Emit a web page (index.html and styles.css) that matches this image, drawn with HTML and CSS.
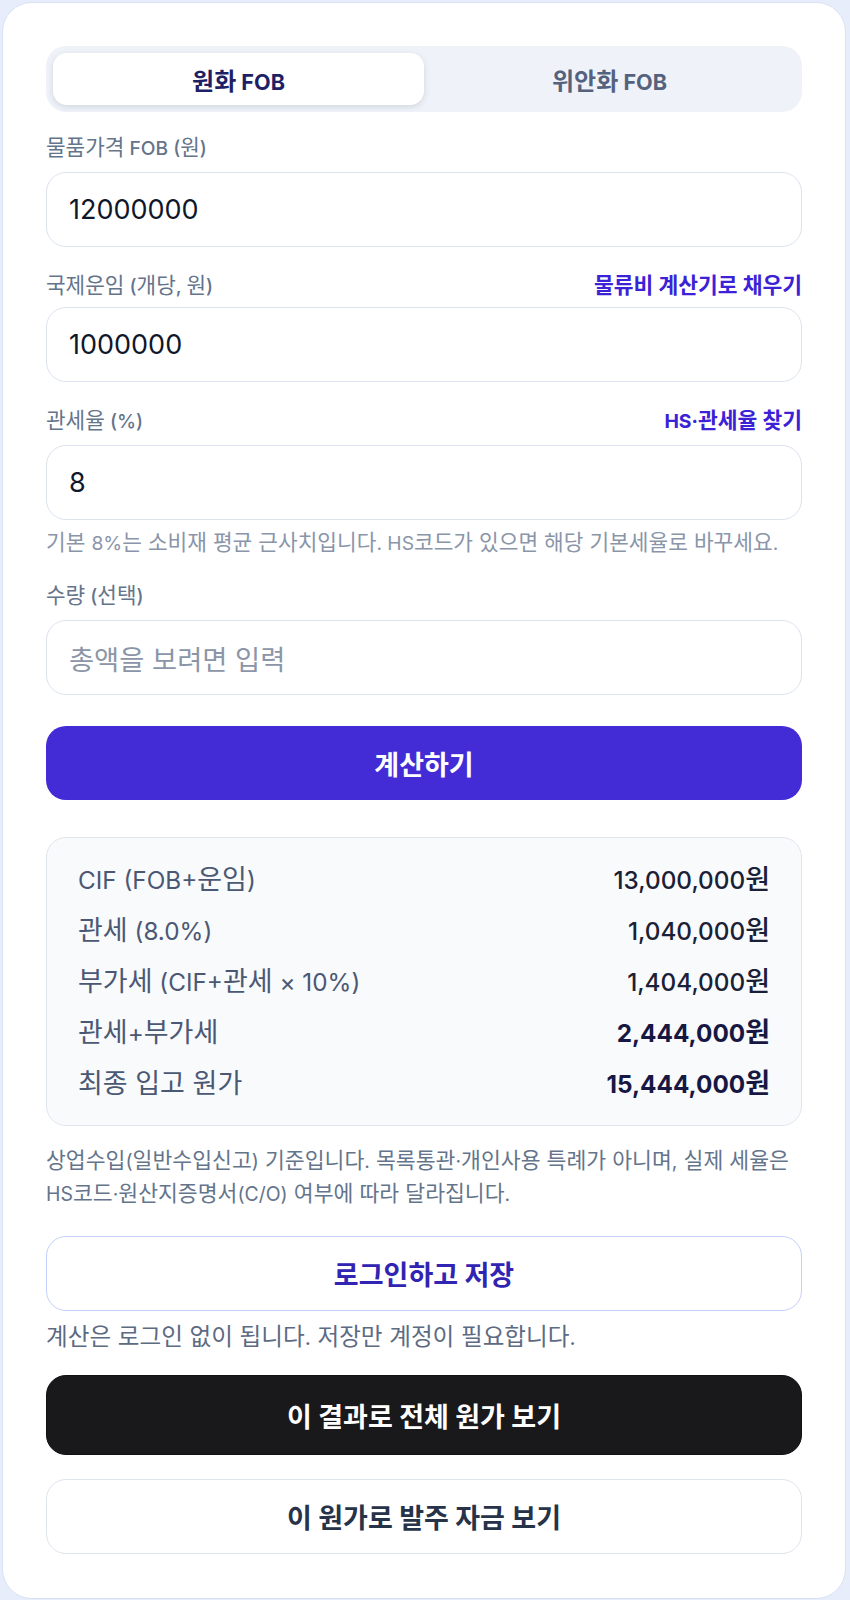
FILE: index.html
```html
<!DOCTYPE html>
<html lang="ko">
<head>
<meta charset="utf-8">
<title>수입 원가 계산기</title>
<link rel="stylesheet" href="styles.css">
</head>
<body>
<main class="card">
  <div class="tabs">
    <button class="tab tab-active" type="button">원화<span class="en"> FOB</span></button>
    <button class="tab" type="button">위안화<span class="en"> FOB</span></button>
  </div>

  <div class="field field-first">
    <div class="label-row"><label class="label">물품가격<span class="en"> FOB (</span>원<span class="en">)</span></label></div>
    <div class="input"><span class="value">12000000</span></div>
  </div>

  <div class="field">
    <div class="label-row label-row-link">
      <label class="label">국제운임<span class="en"> (</span>개당<span class="en">, </span>원<span class="en">)</span></label>
      <a class="link">물류비 계산기로 채우기</a>
    </div>
    <div class="input"><span class="value">1000000</span></div>
  </div>

  <div class="field">
    <div class="label-row">
      <label class="label">관세율<span class="en"> (%)</span></label>
      <a class="link"><span class="en">HS·</span>관세율 찾기</a>
    </div>
    <div class="input"><span class="value">8</span></div>
    <p class="hint">기본 <span class="en">8%</span>는 소비재 평균 근사치입니다<span class="en">. HS</span>코드가 있으면 해당 기본세율로 바꾸세요<span class="en">.</span></p>
  </div>

  <div class="field">
    <div class="label-row"><label class="label">수량<span class="en"> (</span>선택<span class="en">)</span></label></div>
    <div class="input"><span class="placeholder">총액을 보려면 입력</span></div>
  </div>

  <button class="btn btn-primary" type="button">계산하기</button>

  <section class="results">
    <div class="row"><span class="row-label"><span class="en">CIF (FOB+</span>운임<span class="en">)</span></span><span class="row-value"><span class="en">13,000,000</span>원</span></div>
    <div class="row"><span class="row-label">관세<span class="en"> (8.0%)</span></span><span class="row-value"><span class="en">1,040,000</span>원</span></div>
    <div class="row"><span class="row-label">부가세<span class="en"> (CIF+</span>관세<span class="en"> × 10%)</span></span><span class="row-value"><span class="en">1,404,000</span>원</span></div>
    <div class="row"><span class="row-label">관세<span class="en">+</span>부가세</span><span class="row-value row-strong"><span class="en">2,444,000</span>원</span></div>
    <div class="row"><span class="row-label">최종 입고 원가</span><span class="row-value row-strong"><span class="en">15,444,000</span>원</span></div>
  </section>

  <p class="note">상업수입<span class="en">(</span>일반수입신고<span class="en">)</span> 기준입니다<span class="en">.</span> 목록통관<span class="en">·</span>개인사용 특례가 아니며<span class="en">,</span> 실제 세율은 <span class="en">HS</span>코드<span class="en">·</span>원산지증명서<span class="en">(C/O)</span> 여부에 따라 달라집니다<span class="en">.</span></p>

  <button class="btn btn-login" type="button">로그인하고 저장</button>
  <p class="subnote">계산은 로그인 없이 됩니다<span class="en">.</span> 저장만 계정이 필요합니다<span class="en">.</span></p>

  <button class="btn btn-dark" type="button">이 결과로 전체 원가 보기</button>
  <button class="btn btn-outline" type="button">이 원가로 발주 자금 보기</button>
</main>
</body>
</html>
```

FILE: styles.css
```css
* { box-sizing: border-box; }

html, body {
  margin: 0;
}

body {
  padding: 2px 4px 2px 2px;
  background: #e8edfb;
  font-family: "Inter", "Noto Sans CJK KR", "Noto Sans", sans-serif;
  color: #0f172a;
}

/* Latin runs are set slightly smaller than Hangul, as in the original typeface */
.en {
  font-size: 0.9em;
}

.card {
  display: flex;
  flex-direction: column;
  background: #ffffff;
  border: 1px solid #d9e2f5;
  border-radius: 30px;
  padding: 43px 43px 44px 43px;
}

.tabs {
  display: grid;
  grid-template-columns: 1fr 1fr;
  height: 66px;
  padding: 7px;
  background: #eff3f9;
  border-radius: 20px;
}

.tab {
  border: 0;
  background: transparent;
  font-family: inherit;
  font-size: 24px;
  font-weight: 700;
  color: #55627d;
  border-radius: 14px;
  cursor: pointer;
}

.tab-active {
  background: #ffffff;
  color: #1e1f66;
  box-shadow: 0 2px 6px rgba(15, 23, 42, 0.13);
}

.field {
  display: flex;
  flex-direction: column;
  margin-top: 25px;
}

.field-first {
  margin-top: 22px;
}

.label-row {
  display: flex;
  justify-content: space-between;
  align-items: center;
  height: 27px;
  margin-bottom: 11px;
}

.label-row-link {
  margin-bottom: 8px;
}

.label {
  font-size: 21.3px;
  font-weight: 400;
  color: #64748b;
  line-height: 27px;
}

.label .en {
  font-weight: 500;
}

.link {
  font-size: 21.5px;
  font-weight: 700;
  color: #3b22d6;
  line-height: 27px;
  cursor: pointer;
}

.input {
  display: flex;
  align-items: center;
  height: 75px;
  padding: 0 22px;
  border: 1.5px solid #dce3ee;
  border-radius: 20px;
  background: #ffffff;
}

.value {
  font-size: 27px;
  color: #0f172a;
}

.placeholder {
  font-size: 27.3px;
  color: #8b95a7;
}

.hint {
  margin: 9px 0 0;
  font-size: 21.4px;
  line-height: 27px;
  color: #8a95a9;
}

.btn {
  display: flex;
  align-items: center;
  justify-content: center;
  width: 100%;
  height: 75px;
  border-radius: 20px;
  font-family: inherit;
  font-size: 27px;
  font-weight: 700;
  cursor: pointer;
}

.btn-primary {
  margin-top: 31px;
  height: 74px;
  border: 0;
  background: #432bd6;
  color: #ffffff;
}

.results {
  margin-top: 37px;
  padding: 16px 31px;
  border: 1.5px solid #e0e6ef;
  border-radius: 20px;
  background: #f8fafc;
}

.row {
  display: flex;
  justify-content: space-between;
  align-items: center;
  height: 51px;
  font-size: 27px;
  line-height: 36px;
}

.row-label {
  color: #4b5873;
}

.row-value {
  color: #1a2035;
  font-weight: 500;
}

.row-strong {
  color: #171744;
  font-weight: 700;
}

.note {
  margin: 18px 0 0;
  font-size: 21.6px;
  line-height: 32px;
  color: #64748b;
  word-break: keep-all;
}

.btn-login {
  margin-top: 26px;
  border: 1.5px solid #c4cffb;
  background: #ffffff;
  color: #3124b3;
}

.subnote {
  margin: 12px 0 0;
  font-size: 23.6px;
  line-height: 27px;
  color: #5c6a82;
}

.btn-dark {
  margin-top: 24px;
  height: 80px;
  border: 1.5px solid #111114;
  background: #19191c;
  color: #ffffff;
}

.btn-outline {
  margin-top: 24px;
  border: 1.5px solid #dfe5ef;
  background: #ffffff;
  color: #263349;
}
```
